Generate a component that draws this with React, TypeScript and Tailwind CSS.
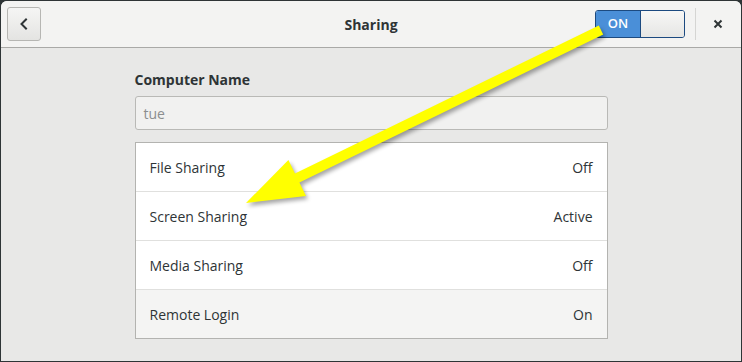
import React from "react";

const rows = [
  { label: "File Sharing", value: "Off", hover: false },
  { label: "Screen Sharing", value: "Active", hover: false },
  { label: "Media Sharing", value: "Off", hover: false },
  { label: "Remote Login", value: "On", hover: true },
];

function Arrow() {
  // callout arrow drawn over the window
  return (
    <svg className="absolute inset-0 pointer-events-none" width="742" height="362" viewBox="0 0 742 362">
      <defs>
        <filter id="arrowShadow" x="-10%" y="-10%" width="120%" height="120%">
          <feGaussianBlur stdDeviation="2" />
        </filter>
      </defs>
      <polygon
        transform="translate(2 3)"
        points="246,203 288.4,160 295,173.5 598.8,25.5 603.2,34.5 299.4,182.5 306,196"
        fill="#000"
        opacity="0.35"
        filter="url(#arrowShadow)"
      />
      <polygon
        points="246,203 288.4,160 295,173.5 598.8,25.5 603.2,34.5 299.4,182.5 306,196"
        fill="#ffff00"
      />
    </svg>
  );
}

export default function App() {
  return (
    <div className="relative w-[742px] h-[362px] bg-[#2e3436] p-px overflow-hidden" style={{ fontFamily: '"Open Sans", "Noto Sans", sans-serif' }}>
      <div className="flex flex-col h-full rounded-t-[6px] bg-[#e8e8e7] overflow-hidden text-[#2e3436]">
        {/* Header bar */}
        <div className="grid grid-cols-[1fr_auto_1fr] items-center h-[47px] shrink-0 bg-[#f3f3f2] border-b border-[#a9a9a7] px-[6px]">
          <div className="flex">
            <button className="flex items-center justify-center w-[34px] h-[34px] rounded-[3px] border border-[#b6b6b3] bg-gradient-to-b from-[#f5f5f4] to-[#e4e4e2]">
              <svg width="16" height="16" viewBox="0 0 16 16">
                <path d="M10 3.5 L5.5 8 L10 12.5" fill="none" stroke="#2e3436" strokeWidth="2" strokeLinecap="square" />
              </svg>
            </button>
          </div>
          <div className="text-center text-[14px] font-bold">Sharing</div>
          <div className="flex items-center justify-end">
            <div className="flex h-[28px] w-[90px] rounded-[3px] border border-[#1c4a80] overflow-hidden">
              <div className="flex items-center justify-center w-[44px] bg-[#4a8fd8] text-white text-[13px] font-semibold">ON</div>
              <div className="flex-1 bg-gradient-to-b from-[#f7f7f6] to-[#e6e6e4] border-l border-[#1c4a80]" />
            </div>
            <div className="w-px h-[32px] bg-[#d5d5d3] ml-[10px]" />
            <button className="flex items-center justify-center w-[34px] h-[34px] ml-[5px]">
              <svg width="12" height="12" viewBox="0 0 12 12">
                <path d="M2.5 2.5 L9.5 9.5 M9.5 2.5 L2.5 9.5" stroke="#2e3436" strokeWidth="2" />
              </svg>
            </button>
          </div>
        </div>

        {/* Content */}
        <div className="flex flex-col w-[473px] mx-auto pt-[22px]">
          <div className="text-[14px] font-bold leading-[19px] mb-[7px]">Computer Name</div>
          <div className="flex items-center h-[34px] rounded-[3px] border border-[#b9b9b6] bg-[#f1f1f0] px-[8px] text-[14px] text-[#8b8e8f]">
            tue
          </div>
          <div className="mt-[12px] border border-[#b3b3b0] bg-white flex flex-col">
            {rows.map((r, i) => (
              <div
                key={r.label}
                className={`flex items-center justify-between px-[14px] text-[14px] ${i > 0 ? "h-[49px] border-t border-[#e0e0de]" : "h-[48px]"} ${r.hover ? "bg-[#f4f4f3]" : "bg-white"}`}
              >
                <span>{r.label}</span>
                <span>{r.value}</span>
              </div>
            ))}
          </div>
        </div>
      </div>
      <Arrow />
    </div>
  );
}
